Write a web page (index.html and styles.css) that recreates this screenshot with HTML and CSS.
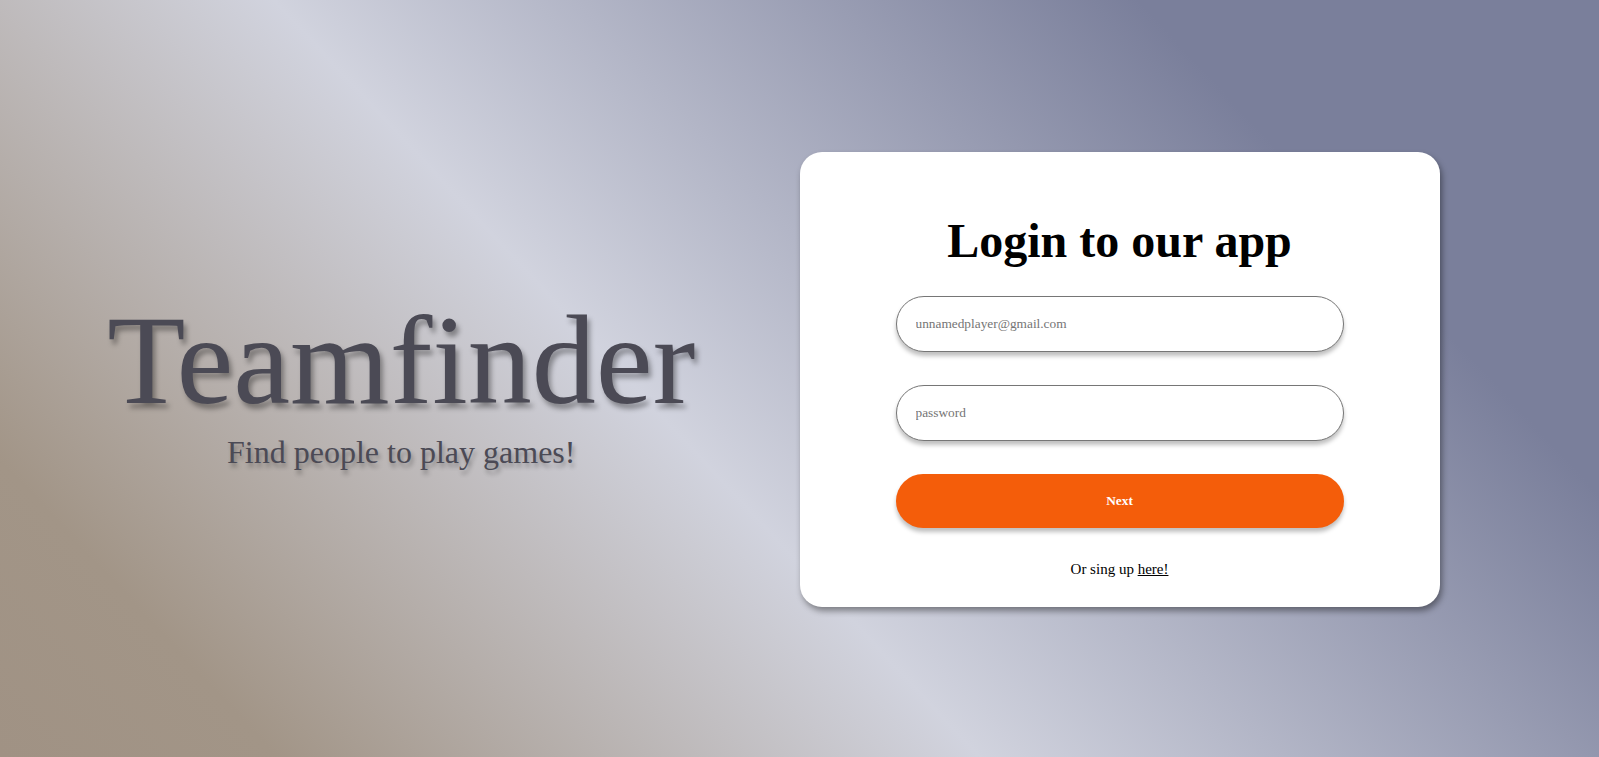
FILE: index.html
```html
<!DOCTYPE html>
<html lang="en">
<head>
<meta charset="utf-8">
<title>Teamfinder</title>
<link rel="stylesheet" href="styles.css">
</head>
<body>
<main class="page">
  <section class="brand">
    <h1 class="brand-title">Teamfinder</h1>
    <p class="brand-sub">Find people to play games!</p>
  </section>
  <section class="login-col">
    <form class="card">
      <h2 class="card-title">Login to our app</h2>
      <input class="field" type="email" placeholder="unnamedplayer@gmail.com">
      <input class="field" type="password" placeholder="password">
      <button class="next-btn" type="button">Next</button>
      <p class="signup">Or sing up <a href="#" class="signup-link">here!</a></p>
    </form>
  </section>
</main>
</body>
</html>
```
FILE: styles.css
```css
html, body {
  margin: 0;
  padding: 0;
  height: 100%;
}

body {
  font-family: "Liberation Serif", "Times New Roman", serif;
  background: linear-gradient(47deg, #a09284 0%, #a29587 12%, #d1d3de 42.5%, #7a7f9b 80%, #7a7f9b 100%);
  overflow: hidden;
}

.page {
  display: grid;
  grid-template-columns: 1fr 1fr;
  align-items: center;
  min-height: 100vh;
}

.brand {
  text-align: center;
  color: #4b4a55;
  padding-left: 3px;
}

.brand-title {
  margin: 0;
  font-size: 128px;
  font-weight: normal;
  line-height: 147px;
  text-shadow: 3px 5px 5px rgba(0, 0, 0, 0.35);
}

.brand-sub {
  margin: 0;
  font-size: 32px;
  line-height: 37px;
  text-shadow: 2px 4px 4px rgba(0, 0, 0, 0.3);
}

.login-col {
  display: flex;
  justify-content: flex-start;
}

.card {
  width: 640px;
  box-sizing: border-box;
  margin-top: 2px;
  background: #fff;
  border-radius: 22px;
  padding: 29px 0;
  display: flex;
  flex-direction: column;
  align-items: center;
  box-shadow: 2px 4px 6px rgba(0, 0, 0, 0.4);
}

.card-title {
  margin: 32px 0 28px;
  font-size: 48px;
  line-height: 55px;
  font-weight: bold;
  color: #000;
}

.field {
  width: 70%;
  height: 56px;
  box-sizing: border-box;
  margin: 0 0 33px;
  padding: 0 19px;
  border: 1px solid #767676;
  border-radius: 28px;
  background: #fff;
  font-family: "Liberation Serif", "Times New Roman", serif;
  font-size: 13.333px;
  color: #000;
  outline: none;
  box-shadow: 0 4px 4px rgba(0, 0, 0, 0.25);
}

.field::placeholder {
  color: #757575;
}

.next-btn {
  width: 70%;
  height: 54px;
  border: none;
  border-radius: 27px;
  background: #f45d0a;
  color: #fff;
  font-family: "Liberation Serif", "Times New Roman", serif;
  font-size: 13.333px;
  font-weight: bold;
  box-shadow: 0 4px 4px rgba(0, 0, 0, 0.25);
  cursor: pointer;
}

.signup {
  margin: 32px 0 0;
  font-size: 15px;
  line-height: 18px;
  color: #000;
}

.signup-link {
  color: #000;
  text-decoration: underline;
}
```
